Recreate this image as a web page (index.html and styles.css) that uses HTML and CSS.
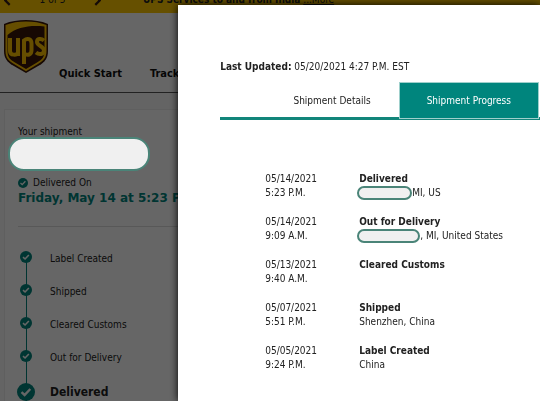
FILE: index.html
```html
<!DOCTYPE html>
<html lang="en">
<head>
    <meta charset="UTF-8">
    <meta name="viewport" content="width=device-width, initial-scale=1.0">
    <title>Tracking | UPS</title>
    <link rel="stylesheet" href="styles.css">
</head>
<body>

<svg class="defs" aria-hidden="true">
    <symbol id="check" viewBox="0 0 18 18">
        <circle cx="9" cy="9" r="9" fill="#00857d"/>
        <path d="M4.5 9.2 7.6 12 13.3 6" fill="none" stroke="#fff" stroke-width="2.4"/>
    </symbol>
</svg>

<div class="banner">
    <div class="pager">
        <button class="arrow" aria-label="Previous alert"><svg viewBox="0 0 6 10"><path d="M5 1 1 5l4 4"/></svg></button>
        <span>1 of 5</span>
        <button class="arrow" aria-label="Next alert"><svg viewBox="0 0 6 10"><path d="M1 1l4 4-4 4"/></svg></button>
    </div>
    <div class="alert"><b>UPS Services to and from India</b> <a href="#">...More</a></div>
</div>

<header class="header">
    <a class="logo" href="#" aria-label="UPS home">
        <svg viewBox="0 0 46 54">
            <path d="M1 4C8 1 15 0 23 0s15 1 22 4v27c0 7-3 11-9 14.500L23 53 10 45.500C4 42 1 38 1 31z" fill="#3a1608"/>
            <path d="M2.500 5C9 2.500 15 1.500 23 1.500S37 2.500 43.500 5v26c0 6.500-3 10-8.500 13L23 51.200 11 44c-5.500-3-8.500-6.500-8.500-13z" fill="#ffc400"/>
            <path d="M4.500 15C14 7 27 5 41.500 6.500V31c0 5.500-2 8.500-7.500 11.500L23 49l-11-6.500C6.500 39.500 4.500 36.500 4.500 31z" fill="#3a1608"/>
            <g fill="none" stroke="#ffc400" stroke-width="4">
                <path d="M7 18v13c0 5 7 4 8 2M15 18v18"/>
                <path d="M21 44V20.500c3-2.500 7.500-2 7.500 3v6.500c0 5-3.500 5.500-6.500 4"/>
                <path d="M41 20.500c-3-2.500-7-2-7 1.500 0 4 7 4 7 8.500 0 4-5 4.500-8 2"/>
            </g>
        </svg>
    </a>
    <nav class="nav">
        <a href="#">Quick Start</a>
        <a href="#">Tracking</a>
    </nav>
</header>

<main class="main">
    <section class="card">
        <div class="label">Your shipment</div>
        <div class="number"></div>
        <div class="status"><svg><use href="#check"/></svg>Delivered On</div>
        <h2>Friday, May 14 at 5:23 P.M.</h2>
        <ul class="steps">
            <li><svg><use href="#check"/></svg>Label Created</li>
            <li><svg><use href="#check"/></svg>Shipped</li>
            <li><svg><use href="#check"/></svg>Cleared Customs</li>
            <li><svg><use href="#check"/></svg>Out for Delivery</li>
            <li class="current"><svg><use href="#check"/></svg>Delivered</li>
        </ul>
    </section>
</main>

<div class="overlay"></div>

<div class="modal" role="dialog" aria-label="Shipment progress">
    <p class="updated"><b>Last Updated:</b> 05/20/2021 4:27 P.M. EST</p>
    <div class="tabs" role="tablist">
        <button class="tab" role="tab">Shipment Details</button>
        <button class="tab active" role="tab" aria-selected="true">Shipment Progress</button>
    </div>
    <table class="events">
        <tr>
            <td>05/14/2021<br>5:23 P.M.</td>
            <td><b>Delivered</b><br><span class="city"></span>MI, US</td>
        </tr>
        <tr>
            <td>05/14/2021<br>9:09 A.M.</td>
            <td><b>Out for Delivery</b><br><span class="city wide"></span>, MI, United States</td>
        </tr>
        <tr>
            <td>05/13/2021<br>9:40 A.M.</td>
            <td><b>Cleared Customs</b></td>
        </tr>
        <tr>
            <td>05/07/2021<br>5:51 P.M.</td>
            <td><b>Shipped</b><br>Shenzhen, China</td>
        </tr>
        <tr>
            <td>05/05/2021<br>9:24 P.M.</td>
            <td><b>Label Created</b><br>China</td>
        </tr>
    </table>
</div>

</body>
</html>
```
FILE: styles.css
```css
* {
    box-sizing: border-box;
}

body {
    margin: 0;
    height: 100vh;
    overflow: hidden;
    background: #fff;
    color: #222;
    font-family: Tahoma, "DejaVu Sans Condensed", "Noto Sans", sans-serif;
    font-size: 10px;
    line-height: 14px;
}

button {
    padding: 0;
    border: none;
    background: none;
    color: inherit;
    font: inherit;
    cursor: pointer;
}

.defs {
    display: none;
}

/* alert banner */
.banner {
    display: flex;
    align-items: flex-end;
    gap: 42px;
    height: 13px;
    padding: 0 4px 6px;
    overflow: hidden;
    background: #ffc800;
    white-space: nowrap;
}

.pager {
    display: flex;
    align-items: center;
    justify-content: space-between;
    width: 97px;
}

.arrow {
    display: flex;
}

.arrow svg {
    width: 7px;
    height: 11px;
    fill: none;
    stroke: #351c15;
    stroke-width: 2;
}

.alert a {
    color: inherit;
}

/* site header */
.header {
    display: flex;
    align-items: flex-end;
    gap: 10px;
    height: 80px;
    padding: 0 3px 11px;
    border-bottom: 1px solid #555;
}

.logo {
    align-self: flex-start;
    padding-top: 7px;
}

.logo svg {
    display: block;
    width: 46px;
    height: 54px;
}

.nav {
    display: flex;
    gap: 28px;
    font-size: 11px;
    font-weight: bold;
}

.nav a {
    color: #111;
    text-decoration: none;
    white-space: nowrap;
}

/* shipment card */
.main {
    padding: 16px 0 0 4px;
    background: #fafafa;
}

.card {
    padding: 15px 13px 0;
    border: 1px solid #eee;
    background: #fff;
    white-space: nowrap;
}

.number {
    position: relative;
    z-index: 2;
    width: 142px;
    height: 34px;
    margin: -2px 0 5px -10px;
    border: 2px solid #4a8478;
    border-radius: 16px;
    background: #f0f0f0;
}

.status {
    display: flex;
    align-items: center;
    gap: 5px;
}

.status svg {
    width: 10px;
    height: 10px;
}

.card h2 {
    margin: 0 0 20px;
    color: #00857d;
    font-family: Verdana, "DejaVu Sans", sans-serif;
    font-size: 12px;
    line-height: 16px;
}

.steps {
    margin: 0;
    padding: 15px 0 0;
    border-top: 1px solid #ddd;
    list-style: none;
}

.steps li {
    display: grid;
    grid-template-columns: 16px 1fr;
    align-items: center;
    gap: 16px;
    height: 33px;
    background: linear-gradient(#00857d, #00857d) 8px 0 / 1px 100% no-repeat;
}

.steps li:first-child {
    background-position: 8px 16px;
}

.steps svg {
    justify-self: center;
    width: 12px;
    height: 12px;
    margin-bottom: 4px;
}

.steps .current {
    height: 36px;
    font-size: 12px;
    font-weight: bold;
}

.steps .current svg {
    width: 18px;
    height: 18px;
    margin: 0;
}

/* modal */
.overlay {
    position: fixed;
    inset: 0;
    z-index: 1;
    background: rgba(0, 0, 0, 0.6);
}

.modal {
    position: fixed;
    inset: 5px 0 0 33%;
    z-index: 3;
    padding: 55px 0 0 42px;
    background: #fff;
    box-shadow: 0 0 8px #000;
}

.updated {
    margin: 0 0 8px;
}

.tabs {
    display: flex;
    justify-content: flex-end;
    padding-right: 1px;
    border-bottom: 3px solid #12857a;
}

.tab {
    height: 37px;
    margin-bottom: -2px;
    padding: 0 27px;
    border: 1px solid transparent;
}

.tab.active {
    border-color: #9fd0cc;
    background: #00857d;
    color: #fff;
}

.events {
    margin: 52px 0 0 45px;
    border-collapse: collapse;
}

.events td {
    padding: 0 0 15px;
    vertical-align: top;
}

.events td:first-child {
    width: 94px;
}

.city {
    display: inline-block;
    width: 55px;
    height: 14px;
    margin-left: -2px;
    border: 2px solid #4a8478;
    border-radius: 7px;
    background: #f0f0f0;
    vertical-align: top;
}

.city.wide {
    width: 63px;
}
```
